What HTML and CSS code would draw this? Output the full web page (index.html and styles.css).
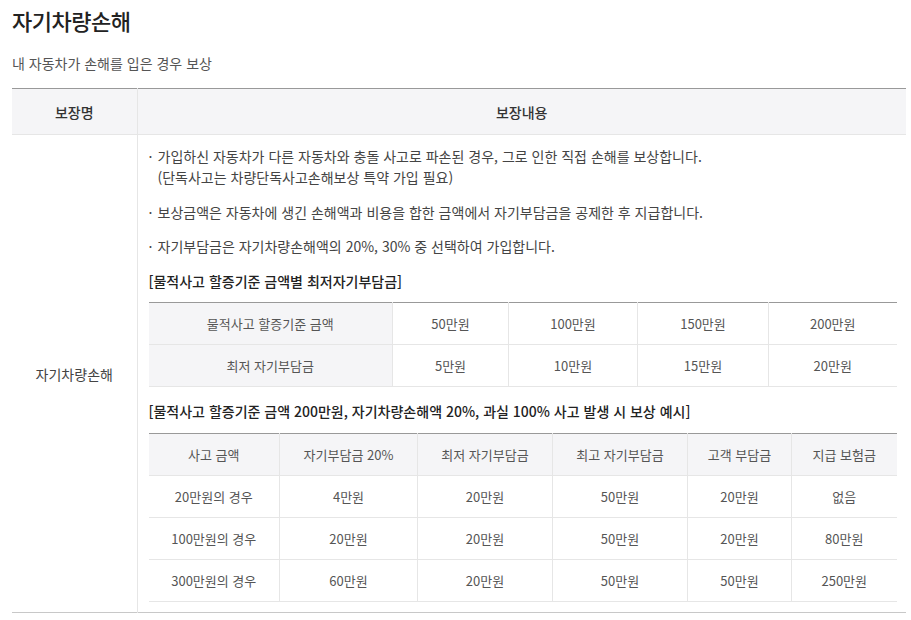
FILE: index.html
```html
<!DOCTYPE html>
<html lang="ko">
<head>
<meta charset="utf-8">
<link rel="stylesheet" href="styles.css">
</head>
<body>
<div class="page">
  <h1 class="title">자기차량손해</h1>
  <p class="subtitle">내 자동차가 손해를 입은 경우 보상</p>
  <table class="cov">
    <colgroup><col class="c-name"><col></colgroup>
    <thead>
      <tr><th>보장명</th><th>보장내용</th></tr>
    </thead>
    <tbody>
      <tr>
        <td class="name">자기차량손해</td>
        <td class="content">
          <ul class="bullets">
            <li><span class="dot">·</span><span>가입하신 자동차가 다른 자동차와 충돌 사고로 파손된 경우, 그로 인한 직접 손해를 보상합니다.<br>(단독사고는 차량단독사고손해보상 특약 가입 필요)</span></li>
            <li><span class="dot">·</span><span>보상금액은 자동차에 생긴 손해액과 비용을 합한 금액에서 자기부담금을 공제한 후 지급합니다.</span></li>
            <li><span class="dot">·</span><span>자기부담금은 자기차량손해액의 20%, 30% 중 선택하여 가입합니다.</span></li>
          </ul>
          <h2 class="sub">[물적사고 할증기준 금액별 최저자기부담금]</h2>
          <table class="inner t1">
            <colgroup><col style="width:244px"><col style="width:116px"><col style="width:129px"><col style="width:131px"><col style="width:128px"></colgroup>
            <tr><th>물적사고 할증기준 금액</th><td>50만원</td><td>100만원</td><td>150만원</td><td>200만원</td></tr>
            <tr><th>최저 자기부담금</th><td>5만원</td><td>10만원</td><td>15만원</td><td>20만원</td></tr>
          </table>
          <h2 class="sub sub2">[물적사고 할증기준 금액 200만원, 자기차량손해액 20%, 과실 100% 사고 발생 시 보상 예시]</h2>
          <table class="inner t2">
            <colgroup><col style="width:131px"><col style="width:138px"><col style="width:135px"><col style="width:135px"><col style="width:104px"><col style="width:105px"></colgroup>
            <thead>
              <tr><th>사고 금액</th><th>자기부담금 20%</th><th>최저 자기부담금</th><th>최고 자기부담금</th><th>고객 부담금</th><th>지급 보험금</th></tr>
            </thead>
            <tbody>
              <tr><td>20만원의 경우</td><td>4만원</td><td>20만원</td><td>50만원</td><td>20만원</td><td>없음</td></tr>
              <tr><td>100만원의 경우</td><td>20만원</td><td>20만원</td><td>50만원</td><td>20만원</td><td>80만원</td></tr>
              <tr><td>300만원의 경우</td><td>60만원</td><td>20만원</td><td>50만원</td><td>50만원</td><td>250만원</td></tr>
            </tbody>
          </table>
        </td>
      </tr>
    </tbody>
  </table>
</div>
</body>
</html>
```

FILE: styles.css
```css
* { box-sizing: border-box; }
body {
  margin: 0;
  background: #fff;
  font-family: "Noto Sans CJK KR", "Noto Sans", sans-serif;
  color: #333;
}
.page {
  padding: 6px 5px 0 12px;
}
.title {
  margin: 0;
  font-size: 22px;
  line-height: 28px;
  font-weight: 500;
  color: #222;
  letter-spacing: -0.5px;
}
.subtitle {
  margin: 19px 0 0;
  font-size: 14px;
  line-height: 20px;
  color: #555;
}
.cov {
  margin-top: 15px;
  width: 894px;
  border-collapse: collapse;
  border-top: 1px solid #999;
  border-bottom: 1px solid #c8c8c8;
  table-layout: fixed;
}
.c-name { width: 125px; }
.cov > thead th {
  height: 46px;
  background: #f5f5f7;
  font-size: 14px;
  font-weight: 500;
  color: #333;
  border-bottom: 1px solid #e6e6e6;
  padding: 0;
}
.cov > thead th + th { border-left: 1px solid #e6e6e6; }
.name {
  text-align: center;
  font-size: 14px;
  color: #444;
  vertical-align: middle;
  padding: 0;
}
.content {
  border-left: 1px solid #e6e6e6;
  padding: 11px 9px 10px 11px;
  vertical-align: top;
}
.bullets {
  list-style: none;
  margin: 0;
  padding: 0;
  font-size: 14px;
  line-height: 21px;
  color: #444;
}
.bullets li {
  display: flex;
  margin-bottom: 13px;
}
.bullets li:first-child { margin-bottom: 14px; }
.bullets li:last-child { margin-bottom: 0; }
.dot {
  flex: 0 0 9px;
}
.sub {
  margin: 14px 0 10px;
  font-size: 14px;
  line-height: 21px;
  font-weight: 500;
  color: #222;
}
.sub2 { margin: 14px 0 11px; }
.inner {
  width: 748px;
  border-collapse: collapse;
  table-layout: fixed;
  border-top: 1px solid #999;
  font-size: 13px;
  color: #555;
}
.inner th, .inner td {
  height: 42px;
  text-align: center;
  font-weight: 400;
  border-bottom: 1px solid #e6e6e6;
  border-left: 1px solid #e6e6e6;
  padding: 0;
}
.inner tr > :first-child { border-left: 0; }
.inner th { background: #f5f5f7; }
```
